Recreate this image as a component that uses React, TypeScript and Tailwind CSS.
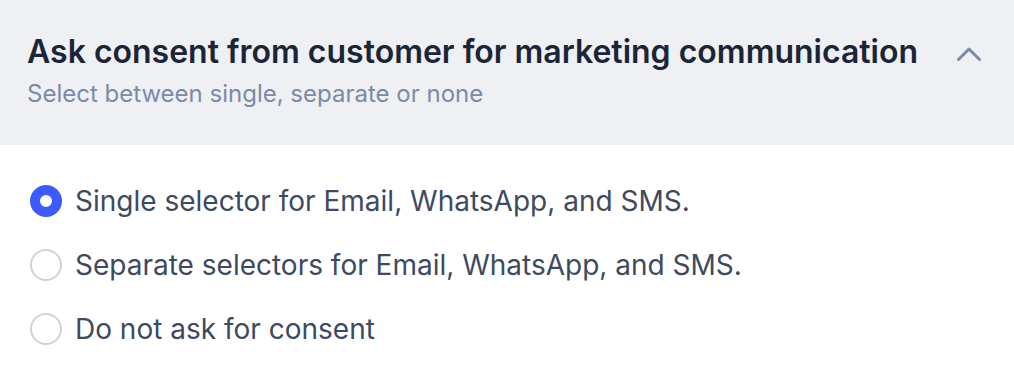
import React, { useState } from "react";

const options = [
  "Single selector for Email, WhatsApp, and SMS.",
  "Separate selectors for Email, WhatsApp, and SMS.",
  "Do not ask for consent",
];

export default function App() {
  const [sel, setSel] = useState(0);
  return (
    <div className="w-[1014px] h-[376px] bg-white" style={{ fontFamily: "Inter, 'Noto Sans', sans-serif" }}>
      <div className="h-[145px] bg-[#eef0f4] flex items-start justify-between pl-[27px] pr-[33px] pt-[32px]">
        <div className="flex flex-col">
          <div className="text-[32px] leading-[40px] font-semibold text-[#1b2538]">
            Ask consent from customer for marketing communication
          </div>
          <div className="text-[24px] leading-[32px] text-[#7b8ba6] mt-[6px]">
            Select between single, separate or none
          </div>
        </div>
        <svg width="24" height="14" viewBox="0 0 24 14" className="mt-[15px] text-[#7b8ba6] shrink-0" fill="none" stroke="currentColor" strokeWidth="3" strokeLinecap="round" strokeLinejoin="round">
          <path d="M1.5 12.5L12 2l10.5 10.5" />
        </svg>
      </div>
      <div className="flex flex-col pl-[30px] pt-[40px] gap-[32px]">
        {options.map((o, i) => (
          <label key={i} className="flex items-center gap-[13px] cursor-pointer h-[32px]" onClick={() => setSel(i)}>
            {sel === i ? (
              <span className="w-[32px] h-[32px] rounded-full border-[10px] border-[#3d5afe] bg-white shrink-0" />
            ) : (
              <span className="w-[32px] h-[32px] rounded-full border-[2.5px] border-[#cdd3de] bg-white shrink-0" />
            )}
            <span className="text-[28px] leading-[42px] text-[#3e4a5f]">{o}</span>
          </label>
        ))}
      </div>
    </div>
  );
}
